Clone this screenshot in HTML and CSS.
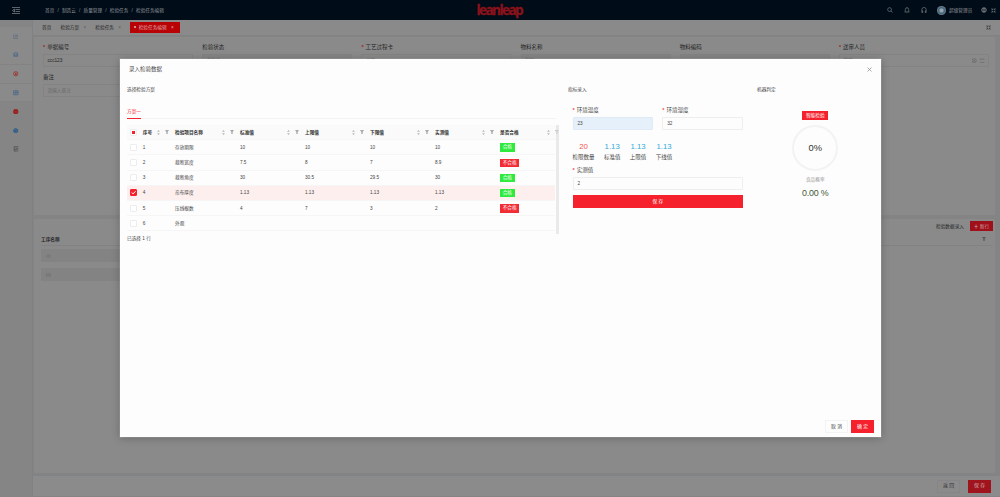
FILE: index.html
```
<!DOCTYPE html>
<html lang="zh-CN">
<head>
    <meta charset="UTF-8">
    <meta name="viewport" content="width=device-width, initial-scale=1.0">
    <title>检验任务编辑</title>
    <link rel="stylesheet" href="styles.css">
</head>
<body>
    <svg class="defs">
        <symbol id="sorter" viewBox="0 0 8 14"><path d="M4 0L8 5H0zM4 14L0 9h8z"/></symbol>
        <symbol id="filter" viewBox="0 0 12 12"><path d="M0 0h12L8 6v6H4V6z"/></symbol>
        <symbol id="expand" viewBox="0 0 14 14"><path d="M1 1l4 4M5 1v4H1M13 1L9 5M9 1v4h4M1 13l4-4M1 9h4v4M13 13L9 9M9 13V9h4"/></symbol>
    </svg>

    <header class="topbar">
        <svg class="fold" viewBox="0 0 16 14"><path d="M0 1h16M7 5h9M7 9h9M0 13h16M5 4L1 7l4 3z"/></svg>
        <nav class="crumbs">
            <span>首页</span><i>/</i><span>制造云</span><i>/</i><span>质量管理</span><i>/</i><span>检验任务</span><i>/</i><span>检验任务编辑</span>
        </nav>
        <div class="logo">leanleap</div>
        <div class="tools">
            <svg class="ico" viewBox="0 0 14 14"><circle cx="6" cy="6" r="4.5"/><path d="M9 9l4 4"/></svg>
            <svg class="ico" viewBox="0 0 14 14"><path d="M1 11.500h12M3 11V6a4 4 0 0 1 8 0v5M6 13.500h2M7 0v2"/></svg>
            <svg class="ico" viewBox="0 0 14 14"><path d="M2 13V6a5 5 0 0 1 10 0v7M2 9h2v4H2M12 9h-2v4h2"/></svg>
            <span class="avatar"></span>
            <span class="user">超级管理员</span>
            <svg class="ico globe" viewBox="0 0 14 14"><circle cx="7" cy="7" r="5.500"/><path d="M1 7h12M7 1v12M3 3.500h8M3 10.500h8"/></svg>
            <svg class="ico full"><use href="#expand"/></svg>
        </div>
    </header>

    <div class="layout">
        <aside class="sidebar">
            <div class="item"><svg class="pale" viewBox="0 0 14 14"><path d="M2 1v11h11M5 3h8M5 7h8"/></svg></div>
            <div class="item line"><svg class="blue" viewBox="0 0 14 14"><path d="M1 4l6-3 6 3-6 3zM2 6v5l5 2 5-2V6M2 8l5 2 5-2"/></svg></div>
            <div class="item"><svg class="rose" viewBox="0 0 14 14"><circle cx="7" cy="7" r="5.500"/><path d="M4 4l6 6M10 4l-6 6M7 4v7"/></svg></div>
            <div class="item line top"><svg class="blue" viewBox="0 0 14 14"><path d="M1 2h12v10H1zM7 2v10M1 7h12M9 5h3"/></svg></div>
            <div class="item on"><svg class="solid" viewBox="0 0 14 14"><path d="M3 1h8l2 6H1zM1 8h12l-3 5H4z"/></svg></div>
            <div class="item on"><svg class="gear" viewBox="0 0 14 14"><path d="M7 1l5 3v6l-5 3-5-3V4z"/><circle cx="7" cy="7" r="1.500"/></svg></div>
            <div class="item on"><svg class="gray" viewBox="0 0 14 14"><path d="M3 1h9v12H3zM3 5h6v4H3M5 13V9"/></svg></div>
        </aside>

        <main class="main">
            <div class="tabs">
                <span class="tab">首页</span>
                <span class="tab">检验方案 <b>×</b></span>
                <span class="tab">检验任务 <b>×</b></span>
                <span class="tab active"><em></em>检验任务编辑 <b>×</b></span>
                <svg class="ico full"><use href="#expand"/></svg>
            </div>

            <section class="card form-card">
                <div class="fields">
                    <div class="field"><label class="req">单据编号</label><div class="box">ccc123</div></div>
                    <div class="field"><label>检验状态</label><div class="box off">未检验</div></div>
                    <div class="field"><label class="req">工艺过程卡</label><div class="box">工艺</div></div>
                    <div class="field"><label>物料名称</label><div class="box off">物料</div></div>
                    <div class="field"><label>物料编码</label><div class="box off"></div></div>
                    <div class="field"><label class="req">送审人员</label>
                        <div class="box">管理
                            <svg class="end" viewBox="0 0 24 10"><circle cx="4" cy="5" r="4"/><path d="M2 3l4 4M6 3L2 7M14 2h9M14 8h9"/></svg>
                        </div>
                    </div>
                </div>
                <div class="field note"><label>备注</label><div class="box hint">请输入备注</div></div>
            </section>

            <section class="card list-card">
                <div class="list-tools"><span>检验数据录入</span><button class="btn-add"><b>＋</b> 新行</button></div>
                <div class="list-head"><span>工序名称</span><svg class="funnel"><use href="#filter"/></svg></div>
                <div class="list-row"><svg viewBox="0 0 12 10"><path d="M1 5l5-4 5 4-5 4zM3 5h6"/></svg></div>
                <div class="list-row"><svg viewBox="0 0 12 10"><path d="M1 2h10v6H1zM3 5h6"/></svg></div>
            </section>

            <footer class="actions">
                <button class="btn dim">返 回</button>
                <button class="btn dim-red">保 存</button>
            </footer>
        </main>
    </div>

    <div class="modal">
        <div class="modal-head">
            <span>录入检验数据</span>
            <svg class="close" viewBox="0 0 10 10"><path d="M1 1l8 8M9 1L1 9"/></svg>
        </div>
        <div class="modal-body">
            <div class="plan">
                <div class="sub">选择检验方案</div>
                <div class="plan-tabs"><span>方案一</span></div>
                <div class="grid">
                    <div class="tr th">
                        <div class="c0"><i class="check half"></i></div>
                        <div class="c1">序号<svg class="s"><use href="#sorter"/></svg><svg class="f"><use href="#filter"/></svg></div>
                        <div>检验项目名称<svg class="s"><use href="#sorter"/></svg><svg class="f"><use href="#filter"/></svg></div>
                        <div>标准值<svg class="s"><use href="#sorter"/></svg><svg class="f"><use href="#filter"/></svg></div>
                        <div>上限值<svg class="s"><use href="#sorter"/></svg><svg class="f"><use href="#filter"/></svg></div>
                        <div>下限值<svg class="s"><use href="#sorter"/></svg><svg class="f"><use href="#filter"/></svg></div>
                        <div>实测值<svg class="s"><use href="#sorter"/></svg><svg class="f"><use href="#filter"/></svg></div>
                        <div>是否合格<svg class="s"><use href="#sorter"/></svg><svg class="f"><use href="#filter"/></svg></div>
                    </div>
                    <div class="tr"><div class="c0"><i class="check"></i></div><div class="c1">1</div><div>存放期限</div><div>10</div><div>10</div><div>10</div><div>10</div><div><span class="tag ok">合格</span></div></div>
                    <div class="tr"><div class="c0"><i class="check"></i></div><div class="c1">2</div><div>裁断宽度</div><div>7.5</div><div>8</div><div>7</div><div>8.9</div><div><span class="tag no">不合格</span></div></div>
                    <div class="tr"><div class="c0"><i class="check"></i></div><div class="c1">3</div><div>裁断角度</div><div>30</div><div>30.5</div><div>29.5</div><div>30</div><div><span class="tag ok">合格</span></div></div>
                    <div class="tr sel"><div class="c0"><i class="check done"><svg viewBox="0 0 10 10"><path d="M1.500 5l2.700 2.700L9 2.500"/></svg></i></div><div class="c1">4</div><div>帘布厚度</div><div>1.13</div><div>1.13</div><div>1.13</div><div>1.13</div><div><span class="tag ok">合格</span></div></div>
                    <div class="tr"><div class="c0"><i class="check"></i></div><div class="c1">5</div><div>压线根数</div><div>4</div><div>7</div><div>3</div><div>2</div><div><span class="tag no">不合格</span></div></div>
                    <div class="tr"><div class="c0"><i class="check"></i></div><div class="c1">6</div><div>外观</div><div></div><div></div><div></div><div></div><div></div></div>
                    <div class="scroll"></div>
                </div>
                <div class="picked">已选择 1 行</div>
            </div>

            <div class="entry">
                <div class="sub">指标录入</div>
                <div class="entry-form">
                    <div class="pair">
                        <div><label class="req">环境温度</label><div class="input fill">23</div></div>
                        <div><label class="req">环境湿度</label><div class="input">32</div></div>
                    </div>
                    <div class="stats">
                        <div class="count"><b>20</b><span>检限数量</span></div>
                        <div><b>1.13</b><span>标准值</span></div>
                        <div><b>1.13</b><span>上限值</span></div>
                        <div><b>1.13</b><span>下线值</span></div>
                    </div>
                    <label class="req">实测值</label>
                    <div class="input">2</div>
                    <button class="save">保 存</button>
                </div>
            </div>

            <div class="judge">
                <div class="sub">机器判定</div>
                <div class="judge-body">
                    <span class="badge">智能检验</span>
                    <div class="ring">0%</div>
                    <span class="rate-label">良品概率</span>
                    <span class="rate">0.00 %</span>
                </div>
            </div>
        </div>
        <div class="modal-foot">
            <button class="btn">取 消</button>
            <button class="btn primary">确 定</button>
        </div>
    </div>
</body>
</html>
```
FILE: styles.css
```
* {
    box-sizing: border-box;
}
body {
    margin: 0;
    height: 497px;
    position: relative;
    overflow: hidden;
    background: #848484;
    color: #262626;
    font: 4.67px/1.5 "Liberation Sans", "Noto Sans CJK SC", sans-serif;
}
svg {
    fill: none;
    stroke: currentColor;
    stroke-width: 1.3;
    flex: none;
}
.defs {
    display: none;
}
i, em {
    font-style: normal;
}
button {
    font: inherit;
    padding: 0;
    border: 0;
}

/* top bar */
.topbar {
    height: 20px;
    display: flex;
    align-items: center;
    background: #000c17;
    color: #8d9297;
    padding-left: 12px;
}
.fold {
    width: 8px;
    height: 7px;
}
.crumbs {
    width: 456.5px;
    padding-left: 25px;
    display: flex;
}
.crumbs i {
    width: 7.6px;
    text-align: center;
}
.logo {
    width: 410px;
    height: 20px;
    color: #8b121b;
    font: bold 13.6px/19px "Open Sans", sans-serif;
    letter-spacing: -1.6px;
    -webkit-text-stroke: 0.3px #8b121b;
}
.tools {
    display: flex;
    align-items: center;
}
.ico {
    width: 6px;
    height: 6px;
    margin-right: 11px;
}
.avatar {
    width: 9px;
    height: 9px;
    border-radius: 50%;
    background: radial-gradient(circle, #9aa5ad 20%, #3e6279 45%, #7d8991 75%);
    margin: 0 3.5px 0 -1px;
}
.user {
    width: 32px;
}
.globe {
    margin-right: 4px;
}
.full {
    width: 5px;
    height: 5px;
    margin-right: 0;
}

/* page */
.layout {
    display: flex;
    height: 476px;
}
.sidebar {
    width: 32px;
    background: #858585;
    padding-top: 7px;
}
.item {
    height: 18.8px;
    display: flex;
    align-items: center;
    justify-content: center;
    background: #8a8a8a;
}
.item.line {
    border-bottom: 1px solid #838383;
}
.item.top {
    border-top: 1px solid #838383;
}
.item.on {
    background: none;
}
.item svg {
    width: 5.5px;
    height: 5.5px;
    stroke-width: 1.8;
}
.pale {
    color: #586c80;
}
.blue {
    color: #456687;
}
.rose {
    color: #9c3029;
}
.solid {
    color: #9c2020;
    fill: #9c2020;
}
.gear {
    color: #1e5487;
    fill: #4f7190;
}
.gray {
    color: #555;
}
.main {
    flex: 1;
    border-left: 1px solid #7f8284;
    display: flex;
    flex-direction: column;
}
.tabs {
    height: 16px;
    background: #8a8a8a;
    border-bottom: 1px solid #808283;
    display: flex;
    align-items: center;
    padding: 0 9px;
}
.tab {
    margin-right: 9.2px;
    white-space: nowrap;
}
.tab b {
    font-weight: normal;
    margin-left: 3px;
    color: #5b5b5b;
}
.tab.active {
    width: 50px;
    height: 11px;
    line-height: 11px;
    background: #b80205;
    color: #dda8a8;
    padding-left: 4px;
}
.tab.active b {
    color: #e0b0b0;
}
.tab em {
    display: inline-block;
    width: 2px;
    height: 2px;
    border-radius: 50%;
    background: #dbb;
    margin: 0 2.5px 1px 0;
}
.tabs .full {
    margin-left: auto;
}
.card {
    background: #8a8a8a;
    margin: 1px 5px 0 1px;
    border-radius: 1px;
}
.form-card {
    height: 178px;
    padding: 6px 0 0 9px;
}
.fields {
    display: flex;
    gap: 9.2px;
}
.field {
    width: 150px;
}
label {
    display: block;
    font-size: 5.5px;
    line-height: 8px;
}
.req::before {
    content: "*";
    color: #f5444b;
    font-weight: bold;
    margin-right: 2px;
}
.field .req::before {
    color: #9e2228;
}
.box {
    height: 13px;
    margin-top: 3px;
    border: 1px solid #838383;
    padding-left: 3.5px;
    line-height: 11px;
    display: flex;
    align-items: center;
}
.off {
    background: #858585;
}
.end {
    width: 13px;
    height: 5.5px;
    margin: 0 3px 0 auto;
    color: #686868;
}
.note {
    width: 309px;
    margin-top: 5.5px;
}
.note .box {
    margin-top: 3.5px;
}
.hint {
    color: #6b6b6b;
}
.list-card {
    height: 254px;
    margin-top: 4px;
    padding: 0 2px 0 7px;
}
.list-tools {
    height: 14px;
    display: flex;
    align-items: center;
    justify-content: flex-end;
    gap: 6px;
}
.btn-add {
    width: 23px;
    height: 10px;
    background: #a0101a;
    color: #d0a8a8;
}
.list-head {
    height: 13px;
    border-bottom: 1px solid #828282;
    display: flex;
    justify-content: space-between;
    align-items: center;
    padding-right: 7px;
    font-weight: bold;
}
.funnel {
    width: 4px;
    height: 4px;
    fill: #5c5c5c;
    stroke: none;
}
.list-row {
    height: 13px;
    width: 800px;
    margin-top: 3px;
    padding-left: 5px;
    background: #838383;
    border-radius: 1px;
    display: flex;
    align-items: center;
    color: #6d6d6d;
}
.list-row + .list-row {
    margin-top: 6px;
}
.list-row svg {
    width: 5px;
    height: 4px;
}
.actions {
    height: 21px;
    margin-top: 2px;
    background: #8b8b8b;
    border-top: 1px solid #808487;
    display: flex;
    align-items: center;
    justify-content: flex-end;
    gap: 8px;
    padding-right: 9px;
}
.btn {
    width: 23px;
    height: 13px;
    background: #fdfdfd;
    border: 1px solid #f3f3f3;
    color: #444;
    font-size: 4.9px;
}
.btn.primary {
    background: #f5222d;
    border-color: #f5222d;
    color: #fff;
}
.btn.dim {
    background: #8b8b8b;
    border-color: #868686;
    color: #333;
}
.btn.dim-red {
    background: #a0141d;
    border-color: #a0141d;
    color: #d5afaf;
}

/* dialog */
.modal {
    position: absolute;
    left: 120px;
    top: 59px;
    width: 761px;
    height: 378px;
    background: #fdfdfd;
    box-shadow: 0 1px 8px rgba(0, 0, 0, 0.25), 0 0 0 0.5px #aaa;
    color: #444;
    display: flex;
    flex-direction: column;
}
.modal-head {
    height: 21px;
    padding: 0 9px;
    display: flex;
    align-items: center;
    justify-content: space-between;
    font-size: 5.5px;
}
.close {
    width: 5px;
    height: 5px;
    color: #888;
    stroke-width: 1.4;
}
.modal-body {
    flex: 1;
    display: flex;
    padding: 6px 0 0 7px;
}
.sub {
    height: 7px;
    line-height: 7px;
}
.plan {
    width: 441px;
}
.plan-tabs {
    margin-top: 15px;
    width: 429px;
    height: 11px;
    border-bottom: 1px solid #f3f3f3;
    color: #f5222d;
}
.plan-tabs span {
    display: inline-block;
    height: 11px;
    line-height: 8px;
    border-bottom: 1px solid #f5222d;
}
.grid {
    position: relative;
    width: 432px;
    height: 109px;
    margin-top: 6px;
    overflow: hidden;
}
.tr {
    width: 427.5px;
    height: 15.2px;
    display: flex;
    border-bottom: 1px solid #f6f6f6;
}
.tr > div {
    width: 65px;
    padding: 0 2.6px;
    display: flex;
    align-items: center;
    flex: none;
}
.tr > .c0 {
    width: 13.2px;
}
.tr > .c1 {
    width: 32.2px;
}
.th {
    width: 437px;
    background: #fafafa;
    font-weight: bold;
    color: #303030;
}
.s {
    width: 3px;
    height: 5px;
    margin-left: auto;
    fill: #b5b5b5;
    stroke: none;
}
.f {
    width: 4px;
    height: 4px;
    margin: 0 0.5px 0 5px;
    fill: #a8a8a8;
    stroke: none;
}
.sel {
    background: #fdefee;
}
.check {
    width: 7px;
    height: 7px;
    border: 1px solid #ededed;
    border-radius: 1px;
    background: #fff;
    display: flex;
    flex: none;
}
.half::before {
    content: "";
    width: 3px;
    height: 3px;
    margin: 1px;
    background: #f5222d;
}
.done {
    background: #f5222d;
    border-color: #f5222d;
}
.done svg {
    width: 5px;
    height: 5px;
    color: #fff;
    stroke-width: 2;
}
.tag {
    height: 8.5px;
    line-height: 8.5px;
    margin-top: 0.6px;
    padding: 0 2.7px;
    color: #fff;
}
.ok {
    background: #2eea3c;
}
.no {
    background: #f22c35;
}
.scroll {
    position: absolute;
    right: 0;
    top: 0;
    width: 3px;
    height: 109px;
    background: rgba(225, 225, 225, 0.7);
}
.picked {
    margin-top: 1px;
}
.entry {
    width: 189px;
}
.entry-form {
    width: 175px;
    padding: 13px 0 0 4.5px;
}
.pair {
    display: flex;
    gap: 9px;
}
.pair > div {
    flex: 1;
}
.input {
    height: 13px;
    margin-top: 3px;
    padding-left: 4px;
    line-height: 11px;
    border: 1px solid #eee;
    border-radius: 1px;
}
.fill {
    background: #e6f0fb;
    border-color: #e0eaf5;
}
.stats {
    display: flex;
    gap: 9.4px;
    margin: 10.5px 0 4px;
}
.stats div {
    text-align: center;
    font-size: 5.5px;
    line-height: 10px;
}
.stats b {
    display: block;
    font-weight: normal;
    font-size: 7.8px;
    line-height: 11px;
    color: #35a9dd;
}
.stats .count b {
    color: #f5534f;
}
.save {
    display: block;
    width: 100%;
    height: 13px;
    margin-top: 5px;
    background: #f5222d;
    color: #fff;
}
.judge-body {
    width: 116.5px;
    margin-top: 17.5px;
    display: flex;
    flex-direction: column;
    align-items: center;
}
.badge {
    height: 9.5px;
    line-height: 9.5px;
    padding: 0 3.5px;
    background: #f5222d;
    color: #fff;
}
.ring {
    width: 46px;
    height: 46px;
    margin-top: 5px;
    border: 2px solid #f3f3f3;
    border-radius: 50%;
    font-size: 9.3px;
    line-height: 42px;
    text-align: center;
    color: #333;
}
.rate-label {
    margin-top: 5px;
    line-height: 7px;
    color: #999;
}
.rate {
    font-size: 8.9px;
    letter-spacing: -0.15px;
    line-height: 12px;
    margin-top: 3.5px;
    color: #435a38;
}
.modal-foot {
    height: 20px;
    padding: 3px 7px 0 0;
    display: flex;
    justify-content: flex-end;
    gap: 3px;
}
```
